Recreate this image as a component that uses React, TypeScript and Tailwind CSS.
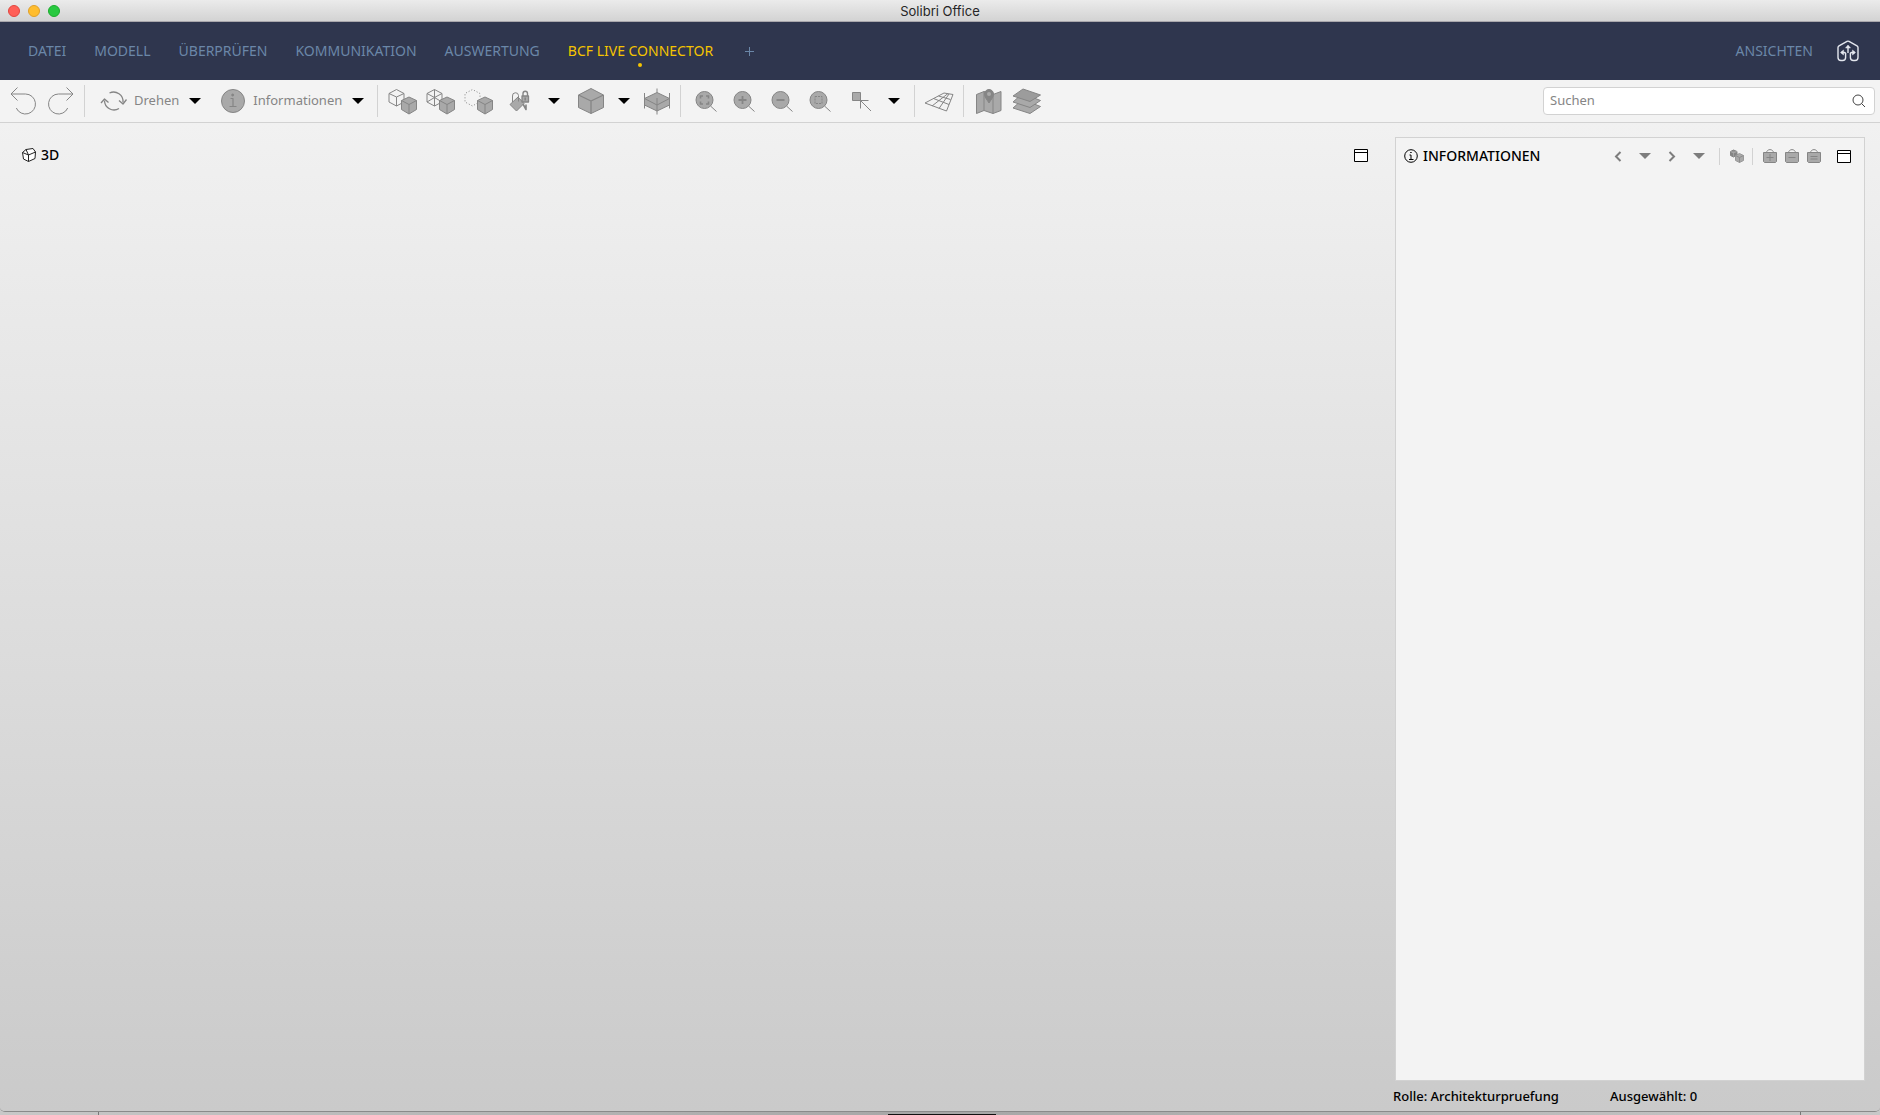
import type { ReactNode } from "react"
import clsx from "clsx"

const menuItems = ["DATEI", "MODELL", "ÜBERPRÜFEN", "KOMMUNIKATION", "AUSWERTUNG", "BCF LIVE CONNECTOR"]

const FILL = "#a9a9a9"
const LINE = "#858585"

function Icon({ children, size = 30, stroke = LINE }: { children: ReactNode; size?: number; stroke?: string }) {
  return (
    <svg
      width={size}
      height={size}
      viewBox={`0 0 ${size} ${size}`}
      fill="none"
      stroke={stroke}
      strokeLinejoin="round"
      className="shrink-0"
      aria-hidden="true"
    >
      {children}
    </svg>
  )
}

function ToolButton({ label, children }: { label: string; children: ReactNode }) {
  return (
    <button type="button" aria-label={label} className="flex h-8 w-[38px] shrink-0 items-center justify-center">
      {children}
    </button>
  )
}

function MenuArrow({ label, className }: { label: string; className: string }) {
  return (
    <button type="button" aria-label={label} className={clsx("flex h-8 shrink-0 items-center justify-center", className)}>
      <svg width="12" height="6" viewBox="0 0 12 6" fill="#000" aria-hidden="true">
        <path d="M0 0h12L6 6z" />
      </svg>
    </button>
  )
}

function Separator() {
  return <div className="h-8 w-px shrink-0 bg-[#d2d2d2]" />
}

// Small solid cube used by the component visibility icons
function SmallCube() {
  return (
    <>
      <path d="M21 11l7.500 3.500v9L21 28l-7.500-4.500v-9z" fill={FILL} />
      <path d="M13.500 14.500L21 18.500l7.500-4M21 18.500V28" />
    </>
  )
}

function Lens({ children }: { children: ReactNode }) {
  return (
    <Icon>
      <circle cx="12.500" cy="14" r="8.500" fill={FILL} />
      <path d="M18.500 20l6 5.500" />
      {children}
    </Icon>
  )
}

function WindowIcon() {
  return (
    <svg width="14" height="13" viewBox="0 0 14 13" fill="#fff" stroke="#000" aria-hidden="true">
      <path d="M.5.500h13v12H.5zM.5 3.500h13" />
    </svg>
  )
}

function Bag({ sign }: { sign: string }) {
  return (
    <svg width="14" height="14" viewBox="0 0 14 14" fill="none" stroke={LINE} aria-hidden="true">
      <path d="M3.500 4C3.500-.5 10.500-.5 10.500 4" />
      <path d="M.5 3.500h13v9l-1 1h-11l-1-1z" fill={FILL} />
      <path d={sign} />
    </svg>
  )
}

function TitleBar() {
  return (
    <header className="relative flex h-[22px] shrink-0 items-center justify-center border-b border-[#a9a7ac] bg-linear-to-b from-[#ebebeb] to-[#d3d3d3]">
      <div className="absolute left-2 flex gap-2">
        <button type="button" aria-label="Schließen" className="size-3 rounded-full border border-[#e2463f] bg-[#ff5f57]" />
        <button type="button" aria-label="Minimieren" className="size-3 rounded-full border border-[#e0a028] bg-[#ffbd2e]" />
        <button type="button" aria-label="Zoomen" className="size-3 rounded-full border border-[#1bac2c] bg-[#28c940]" />
      </div>
      <h1 className="font-[Inter] text-[13px] leading-5 text-[#262626]">Solibri Office</h1>
    </header>
  )
}

function MenuBar() {
  return (
    <nav className="flex h-[58px] shrink-0 items-center bg-[#2f364e] pr-[21px] pl-7 text-sm text-[#6b87a8]">
      <div className="flex items-center gap-7">
        {menuItems.map((item) => {
          const active = item === "BCF LIVE CONNECTOR"
          return (
            <button key={item} type="button" className={clsx("relative leading-5", active && "text-[#f5c400]")}>
              {item}
              {active && <span className="absolute top-[22px] left-1/2 size-1 -translate-x-1/2 rounded-full bg-[#f5c400]" />}
            </button>
          )
        })}
        <button type="button" aria-label="Layout hinzufügen" className="ml-1">
          <svg width="9" height="9" viewBox="0 0 9 9" stroke="currentColor" aria-hidden="true">
            <path d="M4.500 0v9M0 4.500h9" />
          </svg>
        </button>
      </div>
      <button type="button" className="ml-auto leading-5">ANSICHTEN</button>
      <button type="button" aria-label="Solibri" className="ml-6">
        <svg width="22" height="22" viewBox="0 0 22 22" fill="none" stroke="#e4e7ee" strokeWidth="1.400" aria-hidden="true">
          <path d="M8.600 13v4.500a3 3 0 0 1-3 3H4a3 3 0 0 1-3-3V7.500a2 2 0 0 1 1-1.700L10 1.400a2 2 0 0 1 2 0l8 4.400a2 2 0 0 1 1 1.700v10a3 3 0 0 1-3 3h-1.600a3 3 0 0 1-3-3V13" />
          <path d="M4 12.500h3.500a1.500 1.500 0 0 1 1.100 1M18 12.500h-3.500a1.500 1.500 0 0 0-1.100 1M11 6v7" />
          <path d="M3.500 12.500L6.500 10v5zM18.500 12.500L15.500 10v5zM11 5L8.500 8h5z" fill="#e4e7ee" strokeWidth=".5" />
        </svg>
      </button>
    </nav>
  )
}

function Toolbar() {
  return (
    <div className="flex h-[43px] shrink-0 items-center border-b border-[#d2d2d2] bg-[#f3f3f3] pr-[5px] pl-1 text-[13px] text-[#858585]">
      <ToolButton label="Rückgängig">
        <Icon>
          <path d="M9.500 1.500L3 8l6.500 6.500M3 8h14.500a10 10 0 1 1-9.200 14" strokeLinejoin="miter" />
        </Icon>
      </ToolButton>
      <ToolButton label="Wiederholen">
        <Icon>
          <path d="M20.500 1.500L27 8l-6.500 6.500M27 8H12.500a10 10 0 1 0 9.200 14" strokeLinejoin="miter" />
        </Icon>
      </ToolButton>
      <div className="ml-1 flex">
        <Separator />
      </div>

      <button type="button" className="ml-[14px] flex items-center gap-[5px]">
        <Icon>
          <path d="M5.500 14.500a9.500 9.500 0 0 0 14.500 8M24 16.500A9.500 9.500 0 0 0 10.500 7" strokeWidth="1.300" />
          <path d="M2 17l3.500-4 4 3.500M20 14.500l4 3.500 3.500-4.500" strokeWidth="1.300" />
        </Icon>
        Drehen
      </button>
      <MenuArrow label="Navigation wählen" className="w-8" />
      <button type="button" className="ml-[10px] flex items-center gap-2">
        <Icon size={24}>
          <circle cx="12" cy="12" r="11.500" fill={FILL} />
          <path d="M9.500 9.500H12V17M8.500 17.500h7" strokeWidth="1.200" />
          <circle cx="11.700" cy="6" r="1" fill={LINE} />
        </Icon>
        Informationen
      </button>
      <MenuArrow label="Werkzeug wählen" className="w-8" />
      <div className="ml-[3px] flex">
        <Separator />
      </div>

      {/* Visibility */}
      <div className="ml-[6px] flex items-center">
        <ToolButton label="Einblenden">
          <Icon>
            <path d="M8.500 3.500l7.500 4v8.500L8.500 20 1 16V7.500zM1 7.500l7.500 3.500L16 7.500M8.500 11v9" />
            <SmallCube />
          </Icon>
        </ToolButton>
        <ToolButton label="Transparent">
          <Icon>
            <path d="M8.500 3.500l7.500 4v8.500L8.500 20 1 16V7.500zM1 7.500l7.500 4 7.500-4M8.500 3.500V20M1 16l7.500-4.500L16 16" />
            <SmallCube />
          </Icon>
        </ToolButton>
        <ToolButton label="Ausblenden">
          <Icon>
            <path d="M13.500 17L8.500 20 1 16V7.500l7.500-4 7.500 4V11" strokeDasharray="1 2" />
            <SmallCube />
          </Icon>
        </ToolButton>
        <ToolButton label="Färbung sperren">
          <Icon>
            <path d="M8 18.500l8-7.500 6 6.500-7.500 7.500z" fill={FILL} />
            <path d="M10.500 16v-6a3 3 0 0 1 6-.5v6" />
            <path d="M21 10V7.500a2.200 2.200 0 0 1 4.500 0V10" strokeWidth="1.400" />
            <path d="M20 10h6.500v6H20z" fill={FILL} strokeWidth="1.300" />
            <path d="M23.200 11.500v3M21 18l3 5.500v-5" strokeWidth="1.600" />
          </Icon>
        </ToolButton>
        <MenuArrow label="Färbung wählen" className="w-9" />
        <ToolButton label="Darstellung">
          <Icon>
            <path d="M15 2.500L27.500 9v12.500L15 27.500 2.500 21.500V9z" fill={FILL} />
            <path d="M2.500 9L15 15l12.500-6M15 15v12.500" strokeWidth="1.300" />
          </Icon>
        </ToolButton>
        <MenuArrow label="Darstellung wählen" className="w-7" />
        <ToolButton label="Schnitt">
          <Icon>
            <path d="M15 6.500l12.500 6v6.500L15 25 2.500 19v-6.500z" fill={FILL} />
            <path d="M2.500 12.500L15 19l12.500-6.500M2.500 7v15.500M27.500 7v15.500M15 2.500v4M15 12v16.500" />
          </Icon>
        </ToolButton>
      </div>
      <div className="ml-1 flex">
        <Separator />
      </div>

      {/* Zoom */}
      <div className="ml-[7px] flex items-center">
        <ToolButton label="Alles zoomen">
          <Lens>
            <path d="M8.500 12.500v-2.500h2.500M14 10h2.500v2.500M16.500 15.500V18H14M11 18H8.500v-2.500" strokeWidth="1.600" strokeLinejoin="miter" />
          </Lens>
        </ToolButton>
        <ToolButton label="Vergrößern">
          <Lens>
            <path d="M12.500 10v8M8.500 14h8" strokeWidth="1.800" />
          </Lens>
        </ToolButton>
        <ToolButton label="Verkleinern">
          <Lens>
            <path d="M8.500 14h8" strokeWidth="1.800" />
          </Lens>
        </ToolButton>
        <ToolButton label="Auswahl zoomen">
          <Lens>
            <path d="M9 10.500h7v7H9z" strokeDasharray="2 1" />
          </Lens>
        </ToolButton>
        <ToolButton label="Fang">
          <Icon>
            <path d="M8.500 6.500h8v8h-8z" fill={FILL} />
            <path d="M16.500 14.500h8M16.500 14.500v8M16.500 14.500l10.500 10.500" />
          </Icon>
        </ToolButton>
        <MenuArrow label="Fang wählen" className="w-8" />
      </div>
      <div className="ml-1 flex">
        <Separator />
      </div>
      <div className="mx-[5px] flex">
        <ToolButton label="Raster">
          <Icon>
            <path d="M1 17L20 7l9 1.500L22.500 25zM14.500 10l12 3.500M9.500 12.500l15.500 6M8 20l16-12.500M15 22.500l10-14.500" />
          </Icon>
        </ToolButton>
      </div>
      <Separator />
      <div className="ml-[6px] flex">
        <ToolButton label="Karte">
          <Icon>
            <path d="M2.500 8.500L10 5.500l9 3 8-3v19l-8 3-9-3-7.500 3z" fill={FILL} />
            <path d="M10 5.500v19M19 8.500v19" />
            <path d="M15 17c-2-3.500-4.500-5.500-4.500-9a4.500 4.500 0 0 1 9 0c0 3.500-2.500 5.500-4.500 9z" fill={LINE} />
            <circle cx="15" cy="8" r="2" fill={FILL} stroke="none" />
          </Icon>
        </ToolButton>
        <ToolButton label="Ebenen">
          <Icon>
            <path d="M5.500 18L1 22l17 5.500 10.500-7L12 14z" fill={FILL} />
            <path d="M5.500 12L1 16l17 5.500 10.500-7L12 8z" fill={FILL} />
            <path d="M11 3L1 10l17 5.500L28.500 9z" fill="#9c9c9c" />
          </Icon>
        </ToolButton>
      </div>

      <label className="ml-auto flex h-7 w-[332px] items-center rounded-[4px] border border-[#d2d2d2] bg-white pr-2 pl-[6px]">
        <input type="search" aria-label="Suchen" placeholder="Suchen" className="min-w-0 flex-1 outline-none placeholder:text-[#858585]" />
        <svg width="14" height="14" viewBox="0 0 14 14" fill="none" stroke="#444" aria-hidden="true">
          <circle cx="6" cy="6" r="5" />
          <path d="M9.500 9.500L13 13" />
        </svg>
      </label>
    </div>
  )
}

function InfoPanel() {
  return (
    <section className="flex w-[470px] shrink-0 flex-col border border-[#d2d2d2] bg-[#f3f3f3]">
      <div className="flex h-9 items-center pr-[13px] pl-2">
        <svg width="14" height="14" viewBox="0 0 14 14" fill="none" stroke="#000" aria-hidden="true">
          <circle cx="7" cy="7" r="6.300" />
          <path d="M5.500 6H7v4M5 10.500h4.500M6.200 3.500h1.500" />
        </svg>
        <h2 className="ml-[5px] text-sm leading-5 font-medium">INFORMATIONEN</h2>
        <div className="ml-auto flex items-center">
          <button type="button" aria-label="Zurück" className="flex w-5 justify-center">
            <svg width="8" height="11" viewBox="0 0 8 11" fill="none" stroke="#7d7d7d" strokeWidth="2" aria-hidden="true">
              <path d="M6.500 1L2 5.500 6.500 10" />
            </svg>
          </button>
          <button type="button" aria-label="Verlauf zurück" className="flex w-[34px] justify-center">
            <svg width="12" height="6" viewBox="0 0 12 6" fill="#7d7d7d" aria-hidden="true"><path d="M0 0h12L6 6z" /></svg>
          </button>
          <button type="button" aria-label="Vor" className="flex w-5 justify-center">
            <svg width="8" height="11" viewBox="0 0 8 11" fill="none" stroke="#7d7d7d" strokeWidth="2" aria-hidden="true">
              <path d="M1.500 1L6 5.500 1.500 10" />
            </svg>
          </button>
          <button type="button" aria-label="Verlauf vor" className="flex w-[34px] justify-center">
            <svg width="12" height="6" viewBox="0 0 12 6" fill="#7d7d7d" aria-hidden="true"><path d="M0 0h12L6 6z" /></svg>
          </button>
          <div className="mr-[10px] ml-[3px] h-[17px] w-px bg-[#d2d2d2]" />
          <button type="button" aria-label="Komponenten">
            <svg width="14" height="14" viewBox="0 0 14 14" fill={FILL} stroke={LINE} aria-hidden="true">
              <path d="M3.500 1L7 2.500V6L3.500 8 .5 6.500v-4z" fill={LINE} />
              <path d="M.5 2.500l3 1.500L7 2.500M3.500 4v3.500" stroke="#a9a9a9" strokeWidth=".7" />
              <path d="M9.500 4.500l4 2v5l-4 2-4-2v-5z" stroke="#999" />
              <path d="M5.500 6.500l4 2 4-2M9.500 8.500v5" stroke="#8d8d8d" />
            </svg>
          </button>
          <div className="mr-[10px] ml-2 h-[17px] w-px bg-[#d2d2d2]" />
          <div className="flex gap-2">
            <button type="button" aria-label="Zum Auswahlkorb hinzufügen"><Bag sign="M7 5v7M3.500 8.500h7" /></button>
            <button type="button" aria-label="Aus Auswahlkorb entfernen"><Bag sign="M3.500 8.500h7" /></button>
            <button type="button" aria-label="Auswahlkorb setzen"><Bag sign="M3.500 7.500h7M3.500 10h7" /></button>
          </div>
          <button type="button" aria-label="Informationen maximieren" className="ml-4"><WindowIcon /></button>
        </div>
      </div>
    </section>
  )
}

export default function App() {
  return (
    <div className="flex h-screen min-w-[1400px] flex-col bg-linear-to-r from-[#c8c8c8] via-[#a6a6a6] to-[#c8c8c8] font-['Noto_Sans',sans-serif]">
      <div className="flex min-h-0 flex-1 flex-col overflow-hidden rounded-b-[5px] border-b border-[#8a8a8a] bg-[#cacaca]">
        <TitleBar />
        <MenuBar />
        <Toolbar />
        <main className="flex min-h-0 flex-1 flex-col bg-linear-to-b from-[#f1f1f1] to-[#cacaca] pt-[14px] pr-[15px]">
          <div className="flex min-h-0 flex-1">
            <section className="min-w-0 flex-1">
              <div className="flex h-9 items-center pr-[27px] pl-[22px]">
                <svg width="14" height="14" viewBox="0 0 14 14" fill="#fff" stroke="#222" strokeLinejoin="round" aria-hidden="true">
                  <path d="M.5 4.500L4 1.500l7-1 2.500 3.500-.5 6.500-6.500 3-5-2.500z" />
                  <path d="M.5 4.500l6 2.500 7-3M6.500 7v6.500M6.500 7L4 1.500" fill="none" />
                </svg>
                <h2 className="ml-[5px] text-sm leading-5 font-medium">3D</h2>
                <button type="button" aria-label="3D maximieren" className="ml-auto"><WindowIcon /></button>
              </div>
            </section>
            <InfoPanel />
          </div>
          <footer className="flex h-[30px] shrink-0 items-center justify-end text-[13px] leading-5 font-medium">
            <div className="flex w-[472px]">
              <span className="w-[217px]">Rolle: Architekturpruefung</span>
              <span>Ausgewählt: 0</span>
            </div>
          </footer>
        </main>
      </div>
      {/* Edge of the desktop below the window */}
      <div className="flex h-[3px] shrink-0 items-end justify-between pr-[79px] pl-[98px]">
        <div className="h-[3px] w-px bg-[#777]" />
        <div className="mr-4 h-px w-[108px] bg-[#111]" />
        <div className="h-[3px] w-px bg-[#777]" />
      </div>
    </div>
  )
}
